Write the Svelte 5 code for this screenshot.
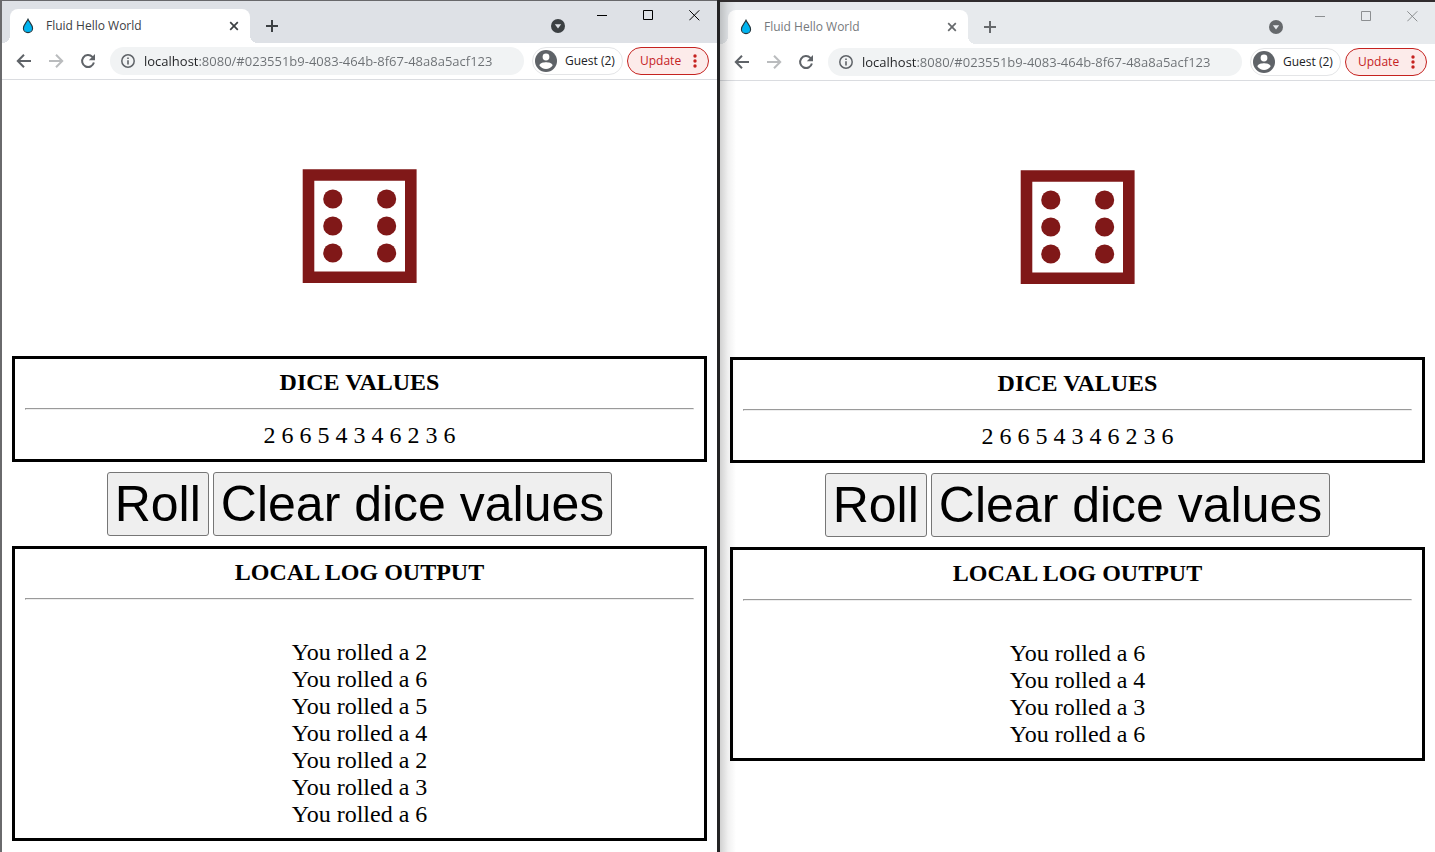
<script lang="ts">
  type Win = { id: string; active: boolean; values: number[]; log: number[] };

  const values = [2, 6, 6, 5, 4, 3, 4, 6, 2, 3, 6];
  const url = 'localhost:8080/#023551b9-4083-464b-8f67-48a8a5acf123';
  const pips = [30, 57, 84];

  let windows: Win[] = $state([
    { id: 'first', active: true, values, log: [2, 6, 5, 4, 2, 3, 6] },
    { id: 'second', active: false, values, log: [6, 4, 3, 6] }
  ]);

  function roll(win: Win) {
    const value = Math.floor(Math.random() * 6) + 1;
    win.log.push(value);
    for (const w of windows) w.values = [...w.values, value];
  }

  function clear() {
    for (const w of windows) w.values = [];
  }
</script>

<div class="desktop">
  {#each windows as win (win.id)}
    <section class="window" class:inactive={!win.active}>
      <header class="strip">
        <div class="tab">
          <svg class="drop" width="12" height="16" viewBox="0 0 12 16" aria-hidden="true">
            <path d="M6 1.2C4.8 4 1.4 7 1.4 10.2a4.6 4.4 0 0 0 9.2 0C10.6 7 7.2 4 6 1.2Z" fill="#00b4f0" stroke="#24343b" stroke-width="1.1" />
          </svg>
          <span class="title">Fluid Hello World</span>
          <button class="close" aria-label="Close tab">
            <svg width="10" height="10" viewBox="0 0 10 10"><path d="M1.2 1.2l7.6 7.6M8.8 1.2L1.2 8.8" stroke="currentColor" stroke-width="1.7" /></svg>
          </button>
        </div>
        <button class="new" aria-label="New tab">
          <svg width="12" height="12" viewBox="0 0 12 12"><path d="M6 0v12M0 6h12" stroke="currentColor" stroke-width="2" /></svg>
        </button>
        <button class="search" aria-label="Search tabs">
          <svg width="14" height="14" viewBox="0 0 14 14"><circle cx="7" cy="7" r="7" fill="currentColor" /><path d="M3.8 5.2h6.4L7 9.4Z" class="arrow" /></svg>
        </button>
        <div class="controls">
          <button aria-label="Minimize"><svg width="11" height="11" viewBox="0 0 11 11"><path d="M0 5.5h10" /></svg></button>
          <button aria-label="Maximize"><svg width="11" height="11" viewBox="0 0 11 11"><path d="M.5.5h9v9h-9Z" /></svg></button>
          <button aria-label="Close"><svg width="11" height="11" viewBox="0 0 11 11"><path d="M.3.3l10 10M10.3.3l-10 10" /></svg></button>
        </div>
      </header>

      <nav class="toolbar">
        <div class="nav">
          <button aria-label="Back"><svg width="16" height="16" viewBox="0 0 16 16"><path d="M15 8H2.2M8 1.8L1.8 8L8 14.2" /></svg></button>
          <button class="off" aria-label="Forward"><svg width="16" height="16" viewBox="0 0 16 16"><path d="M1 8h12.8M8 1.8L14.2 8L8 14.2" /></svg></button>
          <button aria-label="Reload"><svg width="16" height="16" viewBox="0 0 16 16"><path d="M13.9 9.6A6 6 0 1 1 12.4 3.9L14 5.6" /><path class="solid" d="M15 1v6.2H8.8Z" /></svg></button>
        </div>
        <label class="address">
          <svg width="14" height="14" viewBox="0 0 14 14" aria-hidden="true">
            <circle cx="7" cy="7" r="6.2" fill="none" stroke="#5f6368" stroke-width="1.5" />
            <path d="M7 6.2V10.4M7 3.5V5" stroke="#5f6368" stroke-width="1.6" />
          </svg>
          <input type="text" value={url} aria-label="Address" spellcheck="false" />
        </label>
        <button class="guest">
          <svg width="22" height="22" viewBox="0 0 22 22" aria-hidden="true">
            <circle cx="11" cy="11" r="11" fill="#5f6368" />
            <circle cx="11" cy="7" r="3.4" fill="#fff" />
            <path d="M4.3 15.2C5.2 12.8 8.7 12.2 11 12.2s5.8.6 6.7 3A7.9 7.9 0 0 1 4.3 15.2Z" fill="#fff" />
          </svg>
          Guest (2)
        </button>
        <button class="update">
          Update
          <svg width="4" height="14" viewBox="0 0 4 14" aria-hidden="true">
            <circle cx="2" cy="2" r="1.7" /><circle cx="2" cy="7" r="1.7" /><circle cx="2" cy="12" r="1.7" />
          </svg>
        </button>
      </nav>

      <main>
        <svg class="die" width="115" height="115" viewBox="0 0 115 115" role="img" aria-label="Die showing six">
          <path d="M6.5 6h102.3v102.3H6.5Z" fill="#fff" stroke="#801818" stroke-width="11.6" />
          {#each pips as y}
            <circle cx="30.8" cy={y} r="9.6" fill="#801818" />
            <circle cx="84.6" cy={y} r="9.6" fill="#801818" />
          {/each}
        </svg>

        <div class="panel">
          <h2>DICE VALUES</h2>
          <hr />
          <p>{win.values.join(' ')}</p>
        </div>
        <div class="actions">
          <button onclick={() => roll(win)}>Roll</button>
          <button onclick={clear}>Clear dice values</button>
        </div>
        <div class="panel">
          <h2>LOCAL LOG OUTPUT</h2>
          <hr />
          <div class="log">
            {#each win.log as value}
              <p>You rolled a {value}</p>
            {/each}
          </div>
        </div>
      </main>
    </section>
  {/each}
</div>

<style>
  :global(body) {
    margin: 0;
    background: #232324;
  }
  .desktop {
    display: grid;
    grid-template-columns: minmax(0, 1fr) minmax(0, 1fr);
    gap: 3px;
    box-sizing: border-box;
    min-height: 100vh;
    border-left: 2px solid #6a6a6c;
  }
  .window {
    --strip: #dee1e6;
    --ink: #3c4043;
    position: relative;
    box-sizing: border-box;
    border-top: 1px solid #68686b;
    background: #fff;
    font: 12px/16px 'Open Sans', 'Noto Sans', sans-serif;
  }
  .inactive {
    --strip: #e7eaed;
    --ink: #66696c;
    border-top: 2px solid #302c2e;
  }
  .inactive::before {
    content: '';
    position: absolute;
    z-index: 1;
    inset: 0 auto 0 0;
    width: 16px;
    background: linear-gradient(to right, rgba(0, 0, 0, 0.18), rgba(0, 0, 0, 0.06) 50%, transparent);
    pointer-events: none;
  }
  button {
    display: flex;
    align-items: center;
    justify-content: center;
    padding: 0;
    border: 0;
    background: none;
    color: inherit;
    font: inherit;
  }
  svg {
    flex: none;
  }
  .strip {
    display: flex;
    height: 42px;
    padding-left: 8px;
    background: var(--strip);
    color: var(--ink);
  }
  .tab {
    position: relative;
    display: flex;
    align-items: center;
    box-sizing: border-box;
    width: 240px;
    margin-top: 8px;
    padding: 0 8px 0 12px;
    border-radius: 8px 8px 0 0;
    background: #fff;
  }
  .tab::before,
  .tab::after {
    content: '';
    position: absolute;
    bottom: 0;
    width: 8px;
    height: 8px;
  }
  .tab::before {
    right: 100%;
    background: radial-gradient(circle at 0 0, transparent 8px, #fff 8px);
  }
  .tab::after {
    left: 100%;
    background: radial-gradient(circle at 100% 0, transparent 8px, #fff 8px);
  }
  .title {
    flex: 1;
    margin-left: 12px;
    white-space: nowrap;
  }
  .inactive .title {
    color: #76797c;
  }
  .close {
    width: 16px;
    height: 16px;
  }
  .new {
    width: 28px;
    height: 28px;
    margin: 11px auto 0 8px;
  }
  .search {
    width: 28px;
    height: 28px;
    margin: 11px 7px 0 0;
  }
  .arrow {
    fill: var(--strip);
  }
  .controls {
    display: flex;
    height: 28px;
    color: #000;
  }
  .inactive .controls {
    color: #8c8f91;
  }
  .controls button {
    width: 46px;
  }
  .controls svg {
    fill: none;
    stroke: currentColor;
  }
  .toolbar {
    display: flex;
    align-items: center;
    height: 36px;
    padding: 0 8px;
    border-bottom: 1px solid #dadce0;
  }
  .nav {
    display: flex;
    gap: 4px;
    margin-right: 8px;
  }
  .nav button {
    width: 28px;
    height: 28px;
  }
  .nav svg {
    fill: none;
    stroke: #5f6368;
    stroke-width: 2;
  }
  .nav .off svg {
    stroke: #babcbe;
  }
  .nav .solid {
    fill: #5f6368;
    stroke: none;
  }
  .address {
    display: flex;
    flex: 1;
    align-items: center;
    gap: 9px;
    min-width: 0;
    height: 28px;
    margin-right: 8px;
    padding: 0 11px;
    border-radius: 14px;
    background: #f1f3f4;
  }
  .address input {
    flex: 1;
    min-width: 0;
    padding: 0;
    border: 0;
    outline: 0;
    background: linear-gradient(to right, #202124 54px, #6b6f73 54px);
    background-clip: text;
    color: transparent;
    font: 13px/20px 'Open Sans', 'Noto Sans', sans-serif;
  }
  .guest,
  .update {
    box-sizing: border-box;
    height: 28px;
    border-radius: 14px;
    white-space: nowrap;
  }
  .guest {
    gap: 8px;
    width: 91px;
    margin-right: 4px;
    padding: 0 8px 0 2px;
    border: 1px solid #e4e5e7;
    color: #202124;
    justify-content: flex-start;
  }
  .update {
    width: 82px;
    padding: 0 11px 0 12px;
    border: 1px solid #c5221f;
    background: #fcebea;
    color: #c5221f;
    justify-content: space-between;
  }
  .update svg {
    fill: #c5221f;
  }
  main {
    display: flex;
    flex-direction: column;
    gap: 10px;
    padding: 89px 10px 10px;
    color: #000;
    font: 24px/27px 'Liberation Serif', 'Times New Roman', serif;
    text-align: center;
  }
  .die {
    align-self: center;
    margin-bottom: 62px;
  }
  .panel {
    padding: 10px;
    border: 3px solid #000;
  }
  h2,
  p {
    margin: 0;
    font-size: 24px;
    line-height: 27px;
  }
  p {
    min-height: 27px;
  }
  hr {
    margin: 12px 0;
    border: 1px solid;
    border-color: #9a9a9a #eee #eee #9a9a9a;
  }
  .log {
    padding-top: 27px;
  }
  .actions {
    display: flex;
    justify-content: center;
    gap: 4px;
  }
  .actions button {
    height: 64px;
    padding: 0 7px;
    border: 1px solid #767676;
    border-radius: 3px;
    background: #efefef;
    font: 50px/58px 'Liberation Sans', Arial, sans-serif;
    white-space: nowrap;
  }
</style>
